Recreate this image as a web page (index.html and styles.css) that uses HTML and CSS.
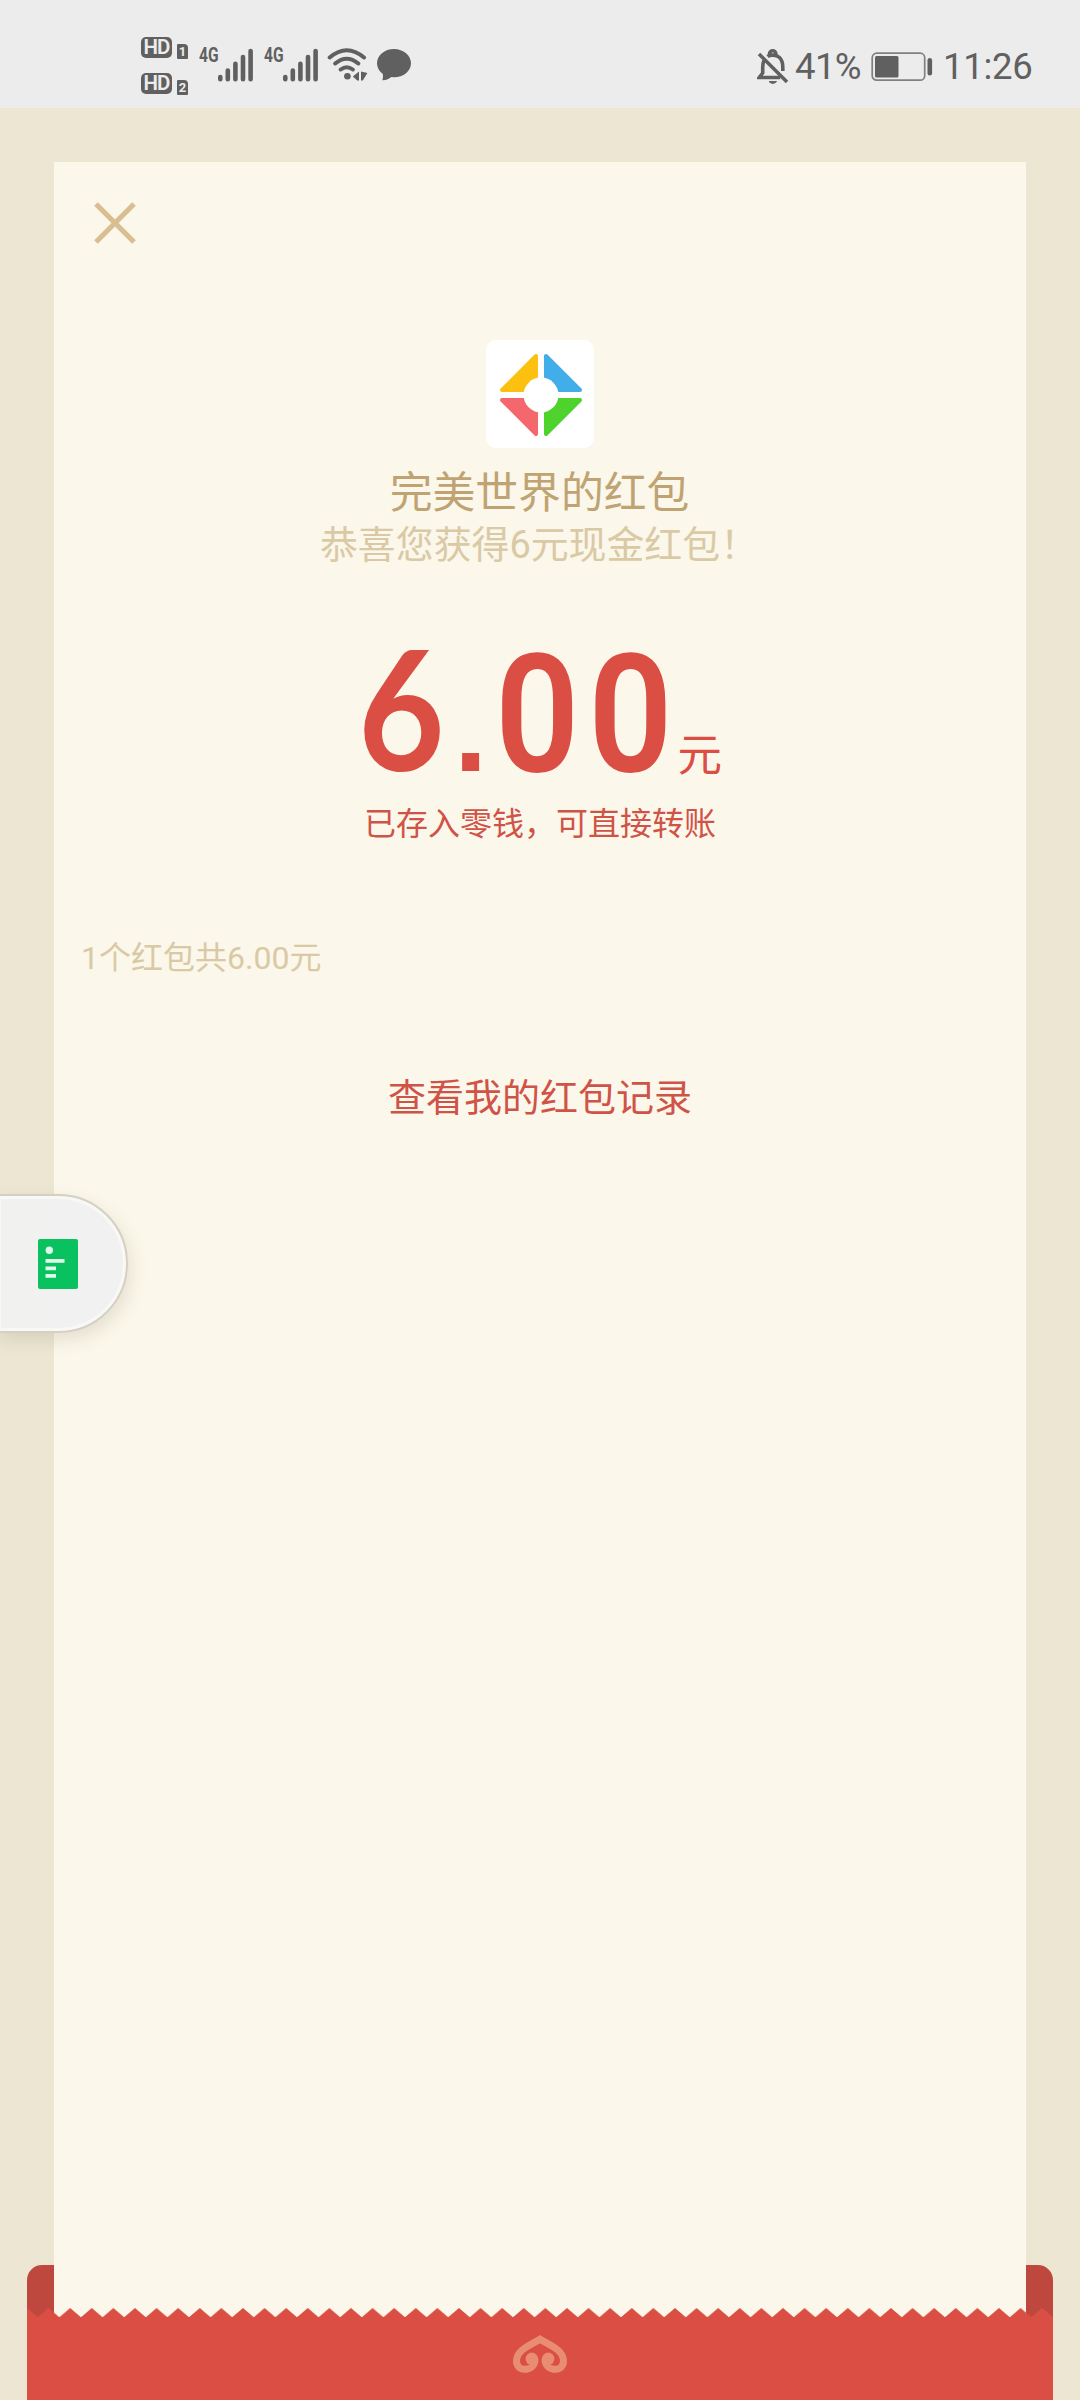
FILE: index.html
```html
<!DOCTYPE html>
<html lang="zh-CN">
<head>
<meta charset="utf-8">
<title>红包详情</title>
<link rel="stylesheet" href="styles.css">
</head>
<body>
<header class="status">
  <div class="status-left">
    <div class="hd-stack">
      <div class="hd-row"><span class="hd">HD</span><span class="sim">1</span></div>
      <div class="hd-row"><span class="hd">HD</span><span class="sim">2</span></div>
    </div>
    <div class="signal"><span class="net">4G</span>
      <svg width="36" height="34" viewBox="0 0 36 34" stroke="#606060" stroke-width="4.6" stroke-linecap="round"><path d="M2.300 29v2.200M9.800 22.600v8.600M17.400 15.800v15.400M25 9v22.200M32.600 3v28.200"/></svg>
    </div>
    <div class="signal"><span class="net">4G</span>
      <svg width="36" height="34" viewBox="0 0 36 34" stroke="#606060" stroke-width="4.6" stroke-linecap="round"><path d="M2.300 29v2.200M9.800 22.600v8.600M17.400 15.800v15.400M25 9v22.200M32.600 3v28.200"/></svg>
    </div>
    <svg class="wifi" width="42" height="34" viewBox="0 0 42 34" fill="none" stroke="#606060" stroke-width="4" stroke-linecap="round"><path d="M2.700 10.500Q19.700-4 37 10.500M8.200 16.500Q19.700 7 31.300 16.500M13.700 22.500Q19.700 18 25.800 22.500"/><circle cx="20.400" cy="29.200" r="3.300" fill="#606060" stroke="none"/><path d="M32 24.500v9h-1.800L25.800 29.500zM34 24.500v9h1.800l4.600-7.500z" fill="#606060" stroke="none"/></svg>
    <svg class="bubble" width="36" height="34" viewBox="0 0 36 34" fill="#606060"><path d="M18 1C8.500 1 1 7.300 1 15.300c0 4.200 2.200 8 5.800 10.700.6 2.500-.2 4.600-.4 6.300 3.400.2 7.300-1.700 9-3.200l2.600.2c9.500 0 17-6.200 17-14S27.500 1 18 1z"/></svg>
  </div>
  <div class="status-right">
    <svg width="32" height="36" viewBox="0 0 32 36" fill="none" stroke="#606060" stroke-width="3.600"><path d="M2 5l28 28"/><path d="M7 11.500c-1 2-1.300 4-1.300 7v5.500l-3.500 4.500h21M10.500 7.500C13 5.500 19 5.500 22.500 8.500c3.300 3 3.300 6.500 3.300 10v3.500M12.500 6V5a3.200 3.200 0 0 1 6.400 0v1"/><path d="M12 32.600h7.600q-3.800 3.600-7.600 0z" fill="#606060" stroke-width="1"/></svg>
    <span class="pct">41%</span>
    <svg class="battery" width="62" height="30" viewBox="0 0 62 30"><rect x="1.200" y="1.200" width="52.500" height="27" rx="4.500" fill="none" stroke="#808080" stroke-width="1.700"/><rect x="4" y="4" width="23.500" height="21.500" rx="1.500" fill="#606060"/><rect x="56.500" y="6" width="4.600" height="17.500" rx="2.300" fill="#606060"/></svg>
    <span class="clock">11:26</span>
  </div>
</header>
<main class="backdrop">
  <section class="paper">
    <svg class="close" width="44" height="44" viewBox="0 0 44 44" stroke="#d9be91" stroke-width="5.200"><path d="M3 3l38 38M41 3L3 41"/></svg>
    <svg class="logo" width="108" height="108" viewBox="0 0 108 108"><rect width="108" height="108" rx="10" fill="#fff"/>
      <g stroke-width="4" stroke-linejoin="round">
        <path d="M50 16v34H16z" fill="#fcc010" stroke="#fcc010"/>
        <path d="M60 16v34h34z" fill="#41aee9" stroke="#41aee9"/>
        <path d="M50 94V60H16z" fill="#f3676d" stroke="#f3676d"/>
        <path d="M60 94V60h34z" fill="#4ed22c" stroke="#4ed22c"/>
      </g><circle cx="55" cy="55" r="17.500" fill="#fff"/></svg>
    <h1 class="title">完美世界的红包</h1>
    <p class="wish">恭喜您获得6元现金红包！</p>
    <div class="amount"><span class="six">6</span><span class="dot">.</span><span class="zeros">00</span><span class="unit">元</span></div>
    <p class="saved">已存入零钱，可直接转账</p>
    <p class="summary">1个红包共6.00元</p>
    <a class="records">查看我的红包记录</a>
  </section>
  <footer class="envelope">
    <svg width="1026" height="135" viewBox="0 0 1026 135">
      <defs><pattern id="teeth" width="21.600" height="10" patternUnits="userSpaceOnUse" y="43"><path d="M0 0L10.800 9.200 21.600 0V10H0z" fill="#db4e43"/></pattern></defs>
      <path d="M0 54V15A15 15 0 0 1 15 0H27V54zM1026 54V15A15 15 0 0 0 1011 0H999V54z" fill="#bf483e"/>
      <rect y="43" width="1026" height="10" fill="url(#teeth)"/>
      <rect y="52" width="1026" height="83" fill="#db4e43"/>
      <path d="M508 95.500C507.500 101 503 104.300 497.500 104.300C491.500 104.300 489 99.500 489.600 94.500C491 84 504 80 513 74.200C522 80 535 84 536.400 94.500C537 99.500 534.500 104.300 528.500 104.300C523 104.300 518.500 101 518 95.500" fill="none" stroke="#e88d71" stroke-width="7" stroke-linecap="round"/>
      <circle cx="504.800" cy="93.800" r="6.200" fill="#e88d71"/><circle cx="521.200" cy="93.800" r="6.200" fill="#e88d71"/>
    </svg>
  </footer>
</main>
<aside class="float-tab">
  <svg width="40" height="50" viewBox="0 0 40 50"><rect width="40" height="50" rx="2" fill="#0ac160"/><g fill="#dff9ea"><circle cx="11.300" cy="11.300" r="3.700"/><path d="M7.500 20h19v3.800h-19zM7.500 27.500H18v3.800H7.500zM7.500 35H18v3.800H7.500z"/></g></svg>
</aside>
</body>
</html>
```
FILE: styles.css
```css
* { box-sizing: border-box; }
body { margin: 0; width: 1080px; height: 2400px; position: relative; overflow: hidden; font-family: Roboto, "Noto Sans CJK SC", sans-serif; background: #ece6d3; }
h1, p { margin: 0; font-weight: 400; }
svg { display: block; flex: none; }

.status { height: 108px; background: #ececec; color: #606060; display: flex; justify-content: space-between; padding: 0 49px 0 141px; }
.status-left { display: flex; align-items: flex-start; height: 108px; padding-top: 37px; }
.hd-stack { display: flex; flex-direction: column; gap: 15px; width: 58px; }
.hd-row { display: flex; align-items: flex-end; gap: 5px; height: 21px; }
.hd { width: 31px; height: 21px; border-radius: 5px; background: #606060; color: #ececec; font: 600 20.500px/21px Roboto, sans-serif; text-align: center; letter-spacing: -1px; }
.sim { width: 11px; height: 15px; background: #606060; color: #ececec; font: 700 13px/15px Roboto, sans-serif; text-align: center; border-radius: 1px 4px 1px 1px; margin-bottom: -1px; }
.signal { display: flex; width: 65px; padding-top: 10px; }
.net { width: 19px; flex: none; margin-top: -2px; font: 700 20.500px/20px Roboto, sans-serif; transform: scaleX(.76); transform-origin: 0 0; }
.signal svg { margin-top: 1px; }
.wifi { margin: 10px 0 0 -2px; }
.bubble { margin: 11px 0 0 7px; }

.status-right { display: flex; align-items: center; padding-top: 25px; font-size: 36.500px; line-height: 44px; }
.pct { margin-left: 6px; width: 67px; letter-spacing: -.6px; }
.battery { margin-left: 9px; }
.clock { margin-left: 10px; width: 88px; letter-spacing: -.3px; }

.backdrop { height: 2292px; padding: 54px 27px 0; }
.paper { height: 2155px; margin: 0 27px; background: #fbf7ea; display: flex; flex-direction: column; align-items: center; }
.close { align-self: flex-start; margin: 39px 0 0 39px; }
.logo { margin-top: 95px; }
.title { margin: 15px 1px 0 0; font-size: 42.800px; line-height: 60px; color: #bfa373; }
.wish { margin: -3px 2px 0 0; font-size: 37.900px; line-height: 50px; color: #dac9a5; }
.amount { margin-top: 67px; width: 364px; height: 140px; display: flex; align-items: baseline; color: #db4e43; font-size: 166px; font-weight: 600; line-height: 140px; white-space: nowrap; }
.six { width: 96px; font-family: Lato, sans-serif; font-weight: 700; transform: scaleX(.9); transform-origin: 0 0; }
.dot { width: 45px; font-family: "Liberation Sans", sans-serif; font-weight: 700; font-size: 120px; }
.zeros { width: 182px; letter-spacing: 10px; transform: scaleX(.89); transform-origin: 0 0; }
.unit { font-size: 44.500px; font-weight: 400; line-height: 60px; }
.saved { margin-top: 24px; font-size: 32px; line-height: 46px; color: #cf5347; }
.summary { align-self: flex-start; margin: 87px 0 0 27px; font-size: 32px; line-height: 48px; color: #dac9a5; }
.records { margin-top: 90px; font-size: 38px; line-height: 52px; color: #cf5347; }

.envelope { position: relative; margin-top: -52px; height: 135px; }

.float-tab { position: absolute; left: -4px; top: 1194px; width: 132px; height: 139px; border: 2px solid #d6d0c3; border-radius: 0 70px 70px 0; background: rgba(241, 241, 241, .97); box-shadow: inset 0 0 0 3px #f8f8f6, 3px 7px 18px rgba(80, 70, 40, .13); display: flex; align-items: center; padding-left: 40px; }
```
